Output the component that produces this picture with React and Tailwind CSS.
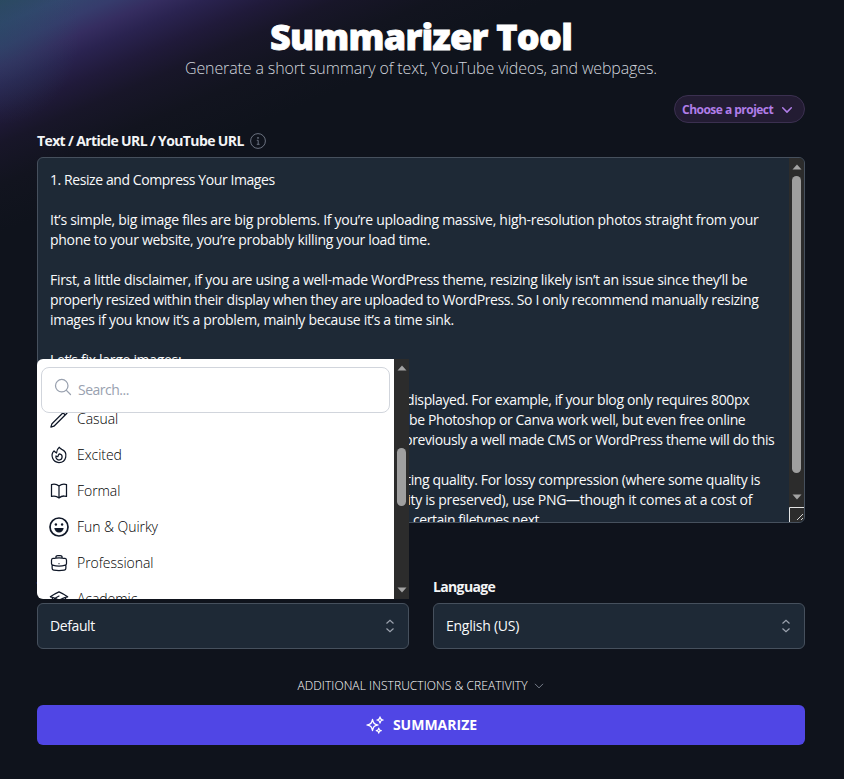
import {
  HiOutlineAcademicCap,
  HiOutlineBookOpen,
  HiOutlineBriefcase,
  HiOutlineChevronDown,
  HiOutlineFire,
  HiOutlineMagnifyingGlass,
  HiOutlinePencil,
  HiOutlineSparkles,
} from 'react-icons/hi2';

const BODY_LINES = [
  { text: '1. Resize and Compress Your Images', className: 'tracking-[-0.42px]' },
  { text: '' },
  { text: 'It’s simple, big image files are big problems. If you’re uploading massive, high-resolution photos straight from your', className: 'tracking-[-0.285px]' },
  { text: 'phone to your website, you’re probably killing your load time.', className: 'tracking-[-0.3px]' },
  { text: '' },
  { text: 'First, a little disclaimer, if you are using a well-made WordPress theme, resizing likely isn’t an issue since they’ll be', className: 'tracking-[-0.31px]' },
  { text: 'properly resized within their display when they are uploaded to WordPress. So I only recommend manually resizing', className: 'tracking-[-0.367px]' },
  { text: 'images if you know it’s a problem, mainly because it’s a time sink.', className: 'tracking-[-0.3px]' },
  { text: '' },
  { text: 'Let’s fix large images:', className: 'tracking-[-0.3px]' },
  { text: '' },
  { text: 'displayed. For example, if your blog only requires 800px', className: 'pl-[356px] tracking-[-0.37px]' },
  { text: 'be Photoshop or Canva work well, but even free online', className: 'pl-[359px] tracking-[-0.375px]' },
  { text: 'previously a well made CMS or WordPress theme will do this', className: 'pl-[354px] tracking-[-0.385px]' },
  { text: '' },
  { text: 'ting quality. For lossy compression (where some quality is', className: 'pl-[356px] tracking-[-0.35px]' },
  { text: 'lity is preserved), use PNG—though it comes at a cost of', className: 'pl-[354px] tracking-[-0.28px]' },
  { text: 'certain filetypes next.', className: 'pl-[363px] tracking-[-0.45px]' },
];

const TONES = [
  { name: 'Casual', icon: HiOutlinePencil },
  { name: 'Excited', icon: HiOutlineFire },
  { name: 'Formal', icon: HiOutlineBookOpen },
  { name: 'Fun & Quirky', icon: SmileIcon },
  { name: 'Professional', icon: HiOutlineBriefcase },
  { name: 'Academic', icon: HiOutlineAcademicCap },
];

function SmileIcon({ className }) {
  return (
    <svg viewBox="0 0 20 20" className={className} fill="none">
      <circle cx="10" cy="10" r="9" stroke="currentColor" strokeWidth="1.7" />
      <circle cx="6.9" cy="7.5" r="1.2" fill="currentColor" />
      <circle cx="13.1" cy="7.5" r="1.2" fill="currentColor" />
      <path d="M5.3 11h9.4c-.3 2.700-2.200 4.500-4.700 4.500s-4.400-1.800-4.700-4.500z" fill="currentColor" />
    </svg>
  );
}

function Arrow({ down }) {
  return (
    <svg viewBox="0 0 10 6" className={down ? 'h-[6px] w-[10px] rotate-180' : 'h-[6px] w-[10px]'}>
      <path d="M5 0.500L9.500 5.500H0.500z" fill="#a3a3a3" />
    </svg>
  );
}

function InfoIcon() {
  return (
    <svg viewBox="0 0 16 16" className="size-4" fill="none" stroke="#6b7280" strokeWidth="1">
      <circle cx="8" cy="8" r="7.400" />
      <path d="M6.800 7.300h1.400v4M6.800 11.300h2.800" />
      <circle cx="8" cy="4.900" r=".5" fill="#6b7280" />
    </svg>
  );
}

function SelectBox({ value, className }) {
  return (
    <div className="flex h-[46px] w-[372px] items-center justify-between rounded-md border border-[#46505d] bg-[#1e2936] pr-[13px] pl-3 text-sm text-gray-50">
      <span className={className}>{value}</span>
      <svg viewBox="0 0 10 14" className="h-[14px] w-[10px]" fill="none" stroke="#9ca3af" strokeWidth="1.200">
        <path d="M1.500 4.500L5 1.200l3.500 3.300M1.500 9.500L5 12.800l3.500-3.300" />
      </svg>
    </div>
  );
}

function ToneMenu() {
  return (
    <div className="absolute bottom-[50px] left-0 flex h-[240px] w-[372px] overflow-hidden rounded-l-md bg-white">
      <div className="flex flex-1 flex-col overflow-hidden">
        <div className="px-1 pt-2">
          <div className="flex h-[46px] items-center rounded-lg border border-gray-300 pl-[11px] text-gray-400">
            <HiOutlineMagnifyingGlass className="mb-[6px] size-5" />
            <span className="ml-[5px] text-sm tracking-[-0.5px]">Search...</span>
          </div>
        </div>
        <div className="flex-1 overflow-hidden">
          <ul className="-mt-3">
            {TONES.map(({ name, icon: Icon }) => (
              <li key={name} className="flex h-9 items-center gap-2 pl-3 text-sm font-light tracking-[-0.05px] text-black">
                <Icon className="size-5 text-gray-900" />
                {name}
              </li>
            ))}
          </ul>
        </div>
      </div>
      <div className="flex w-[15px] flex-col items-center bg-[#2c2c2c] py-[6px]">
        <Arrow />
        <div className="mt-[77px] h-[58px] w-[9px] rounded-full bg-[#9f9f9f]" />
        <div className="mt-auto">
          <Arrow down />
        </div>
      </div>
    </div>
  );
}

export default function App() {
  return (
    <div className="h-[779px] w-[844px] overflow-hidden bg-[#0f131c] bg-[radial-gradient(ellipse_80px_95px_at_0px_30px,#28496380_0%,#28496300_100%),linear-gradient(157deg,#2c4a60_0px,#33476f_23px,#363c6c_44px,#352d60_62px,#2a2350_80px,#201a3a_106px,#181629_132px,#12141f_170px,#0f131c_215px)] pr-[39px] pl-[37px] font-['Open_Sans','Noto_Sans',sans-serif]">
      <h1 className="pt-[17px] text-center text-[36px] leading-10 font-black tracking-[-0.75px] text-white [-webkit-text-stroke:0.8px_white]">
        Summarizer Tool
      </h1>
      <p className="text-center text-base leading-[22px] font-light tracking-[-0.13px] text-gray-300">
        Generate a short summary of text, YouTube videos, and webpages.
      </p>

      <div className="mt-4 flex justify-end">
        <button className="flex h-7 w-[131px] items-center justify-between rounded-full border border-[#3b3050] bg-[#231c33] pt-0.5 pr-[11px] pl-[7px] text-xs font-bold tracking-[-0.52px] text-[#b07de8]">
          Choose a project
          <svg viewBox="0 0 12 12" className="size-3" fill="none" stroke="currentColor" strokeWidth="1.500">
            <path d="M1.700 3.800L6 8.100l4.300-4.300" strokeLinecap="round" strokeLinejoin="round" />
          </svg>
        </button>
      </div>

      <div className="mt-2 flex h-5 items-center gap-[6px]">
        <label className="text-sm font-bold tracking-[-0.62px] text-gray-100">Text / Article URL / YouTube URL</label>
        <InfoIcon />
      </div>

      <div className="mt-[6px] flex h-[366px] overflow-hidden rounded-md border border-[#46505d] bg-[#1e2936]">
        <div className="flex-1 overflow-hidden pt-3 pl-3 text-sm leading-5 whitespace-nowrap text-gray-50">
          {BODY_LINES.map((line, i) => (
            <div key={i} className="h-5">
              <span className={line.className}>{line.text}</span>
            </div>
          ))}
        </div>
        <div className="flex w-[15px] flex-col items-center bg-[#2c2c2c] pt-[6px]">
          <Arrow />
          <div className="mt-[6px] h-[297px] w-[9px] rounded-full bg-[#9f9f9f]" />
          <div className="mt-[21px] flex">
            <Arrow down />
          </div>
          <svg viewBox="0 0 15 15" className="mt-auto size-[15px]" fill="none">
            <path d="M0.500 15V0.500H15" stroke="#e5e5e5" />
            <path d="M8 13L14 7M12 13l2-2" stroke="#d4d4d4" />
          </svg>
        </div>
      </div>

      <div className="mt-[54px] flex justify-between">
        <div className="relative flex flex-col">
          <label className="h-5 text-sm font-bold tracking-[-0.6px] text-gray-100">Tone</label>
          <div className="mt-[6px]">
            <SelectBox value="Default" className="tracking-[-0.4px]" />
          </div>
          <ToneMenu />
        </div>
        <div>
          <label className="block h-5 text-sm font-bold tracking-[-0.65px] text-gray-100">Language</label>
          <div className="mt-[6px]">
            <SelectBox value="English (US)" className="tracking-[-0.25px]" />
          </div>
        </div>
      </div>

      <div className="mt-[27px] flex h-5 items-center justify-center gap-[5px] text-xs font-light tracking-[0.08px] text-white">
        <span>ADDITIONAL INSTRUCTIONS &amp; CREATIVITY</span>
        <HiOutlineChevronDown className="size-3 text-gray-400" />
      </div>

      <button className="mt-[9px] flex h-10 w-full items-center justify-center gap-2 rounded-md bg-[#5046e5] text-sm font-bold text-white">
        <HiOutlineSparkles className="size-5" />
        SUMMARIZE
      </button>
    </div>
  );
}
